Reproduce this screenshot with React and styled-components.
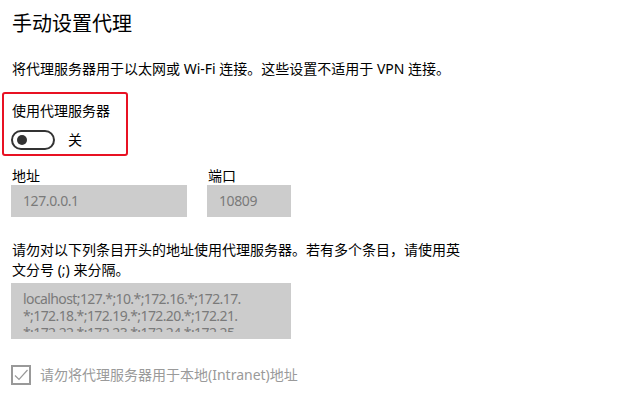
import React from 'react'
import styled, { createGlobalStyle } from 'styled-components';

const Global = createGlobalStyle`
  body {
    margin: 0;
    background: #fff;
    font-family: "Noto Sans", "Noto Sans CJK SC", sans-serif;
    color: #000;
  }
`;

const Page = styled.div`
  padding: 10px 0 0 12px;
  display: flex;
  flex-direction: column;
  align-items: flex-start;
`;

const Title = styled.h1`
  margin: 0;
  font-size: 20px;
  line-height: 28px;
  font-weight: 400;
`;

const Text = styled.p`
  margin: ${p => p.top || 0}px 0 0 0;
  font-size: 14px;
  line-height: 20px;
  max-width: ${p => p.width || 600}px;
`;

const Highlight = styled.div`
  margin: 13px 0 0 -10px;
  width: 126px;
  box-sizing: border-box;
  border: 2px solid #e81123;
  border-radius: 3px;
  padding: 7px 0 4px 8px;
  display: flex;
  flex-direction: column;
  gap: 9px;
`;

const BoxTitle = styled.div`
  font-size: 14px;
  line-height: 20px;
`;

const ToggleRow = styled.div`
  display: flex;
  align-items: center;
  gap: 13px;
  margin-left: -1px;
  font-size: 14px;
  line-height: 20px;
`;

const Switch = styled.div`
  width: 44px;
  height: 20px;
  box-sizing: border-box;
  border: 2px solid #333;
  border-radius: 10px;
  display: flex;
  align-items: center;
  padding-left: 4px;
`;

const Knob = styled.span`
  width: 10px;
  height: 10px;
  border-radius: 50%;
  background: #333;
`;

const Fields = styled.div`
  display: flex;
  gap: 20px;
  margin: 11px 0 0 -1px;
`;

const Field = styled.div`
  display: flex;
  flex-direction: column;
`;

const Label = styled.span`
  font-size: 14px;
  line-height: 18px;
  padding-left: 1px;
`;

const Input = styled.div`
  width: ${p => p.width}px;
  height: 32px;
  box-sizing: border-box;
  background: #cccccc;
  color: #7a7a7a;
  font-size: 14px;
  line-height: 32px;
  padding-left: 12px;
  letter-spacing: -0.4px;
`;

const Area = styled.div`
  margin: 3px 0 0 -1px;
  width: 280px;
  height: 56px;
  box-sizing: border-box;
  background: #cccccc;
  padding: 7px 0 0 12px;
`;

const AreaText = styled.div`
  height: 42px;
  overflow: hidden;
  color: #7a7a7a;
  font-size: 14px;
  line-height: 17px;
  white-space: nowrap;
  letter-spacing: -0.6px;
`;

const CheckRow = styled.div`
  margin: 26px 0 0 -1px;
  display: flex;
  align-items: center;
  gap: 9px;
  color: #9a9a9a;
  font-size: 14px;
  line-height: 20px;
`;

const Box = styled.span`
  width: 20px;
  height: 20px;
  box-sizing: border-box;
  border: 2px solid #999;
  display: flex;
  align-items: center;
  justify-content: center;
`;

const App = () => {
  return (
    <>
      <Global />
      <Page>
        <Title>手动设置代理</Title>
        <Text top={21}>将代理服务器用于以太网或 Wi-Fi 连接。这些设置不适用于 VPN 连接。</Text>
        <Highlight>
          <BoxTitle>使用代理服务器</BoxTitle>
          <ToggleRow>
            <Switch><Knob /></Switch>
            <span>关</span>
          </ToggleRow>
        </Highlight>
        <Fields>
          <Field>
            <Label>地址</Label>
            <Input width={176}>127.0.0.1</Input>
          </Field>
          <Field>
            <Label>端口</Label>
            <Input width={84}>10809</Input>
          </Field>
        </Fields>
        <Text top={23} width={452}>请勿对以下列条目开头的地址使用代理服务器。若有多个条目，请使用英文分号 (;) 来分隔。</Text>
        <Area>
          <AreaText>
            <div>localhost;127.*;10.*;172.16.*;172.17.</div>
            <div>*;172.18.*;172.19.*;172.20.*;172.21.</div>
            <div>*;172.22.*;172.23.*;172.24.*;172.25.</div>
          </AreaText>
        </Area>
        <CheckRow>
          <Box>
            <svg width="16" height="16" viewBox="0 0 16 16">
              <path d="M2 8.5 L6 12.5 L14.5 3" fill="none" stroke="#999" strokeWidth="1.2" />
            </svg>
          </Box>
          <span>请勿将代理服务器用于本地(Intranet)地址</span>
        </CheckRow>
      </Page>
    </>
  );
}

export default App;
